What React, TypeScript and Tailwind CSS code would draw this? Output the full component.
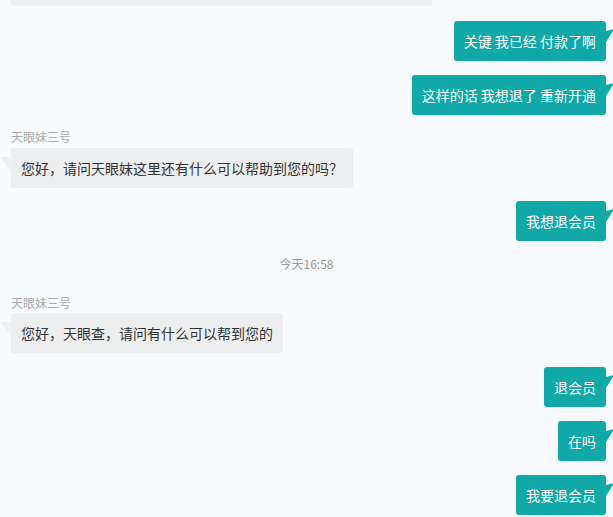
import React from 'react';

const font = { fontFamily: '"Noto Sans CJK SC", "Liberation Sans", sans-serif' };

const UserBubble: React.FC<{ text: string; className?: string }> = ({ text, className = '' }) => (
  <div className={`relative self-end ${className}`}>
    <div className="h-10 flex items-center px-[10px] rounded-[3px] bg-[#10a9a8] text-white text-[14px] leading-5 whitespace-pre">
      {text}
    </div>
    {/* tail */}
    <svg className="absolute top-[8px] -right-[8px]" width="8" height="14" viewBox="0 0 8 14">
      <polygon points="0,2 8,0 0,13" fill="#10a9a8" />
    </svg>
  </div>
);

const BotBubble: React.FC<{ text: string; className?: string }> = ({ text, className = '' }) => (
  <div className={`relative self-start ${className}`}>
    <svg className="absolute top-[9px] -left-[11px]" width="11" height="14" viewBox="0 0 11 14">
      <polygon points="0,0 11,0 11,14" fill="#eef1f2" />
    </svg>
    <div className="h-10 flex items-center px-[10px] rounded-[3px] bg-[#eceeef] text-[#333] text-[14px] leading-5 whitespace-pre">
      {text}
    </div>
  </div>
);

const Name: React.FC<{ className?: string }> = ({ className = '' }) => (
  <div className={`h-4 text-[12px] leading-4 text-[#a9abad] ${className}`}>天眼妹三号</div>
);

export default function App() {
  return (
    <div className="w-[613px] h-[517px] overflow-hidden bg-[#f8fbfd]" style={font}>
      <div className="flex flex-col pl-[11px] pr-[7px]">
        <div className="h-10 w-[421px] -mt-[34px] rounded-[3px] bg-[#eceeef]" />
        <UserBubble className="mt-[15px]" text="关键 我已经 付款了啊" />
        <UserBubble className="mt-[14px]" text="这样的话 我想退了 重新开通" />
        <Name className="mt-[14px]" />
        <BotBubble className="mt-[3px]" text="您好，请问天眼妹这里还有什么可以帮助到您的吗？" />
        <UserBubble className="mt-[13px]" text="我想退会员" />
        <div className="mt-[15px] h-4 text-center text-[12px] leading-4 text-[#999] -ml-[11px] -mr-[7px]">今天16:58</div>
        <Name className="mt-[23px]" />
        <BotBubble className="mt-[2px]" text="您好，天眼查，请问有什么可以帮到您的" />
        <UserBubble className="mt-[14px]" text="退会员" />
        <UserBubble className="mt-[14px]" text="在吗" />
        <UserBubble className="mt-[14px]" text="我要退会员" />
      </div>
    </div>
  );
}
